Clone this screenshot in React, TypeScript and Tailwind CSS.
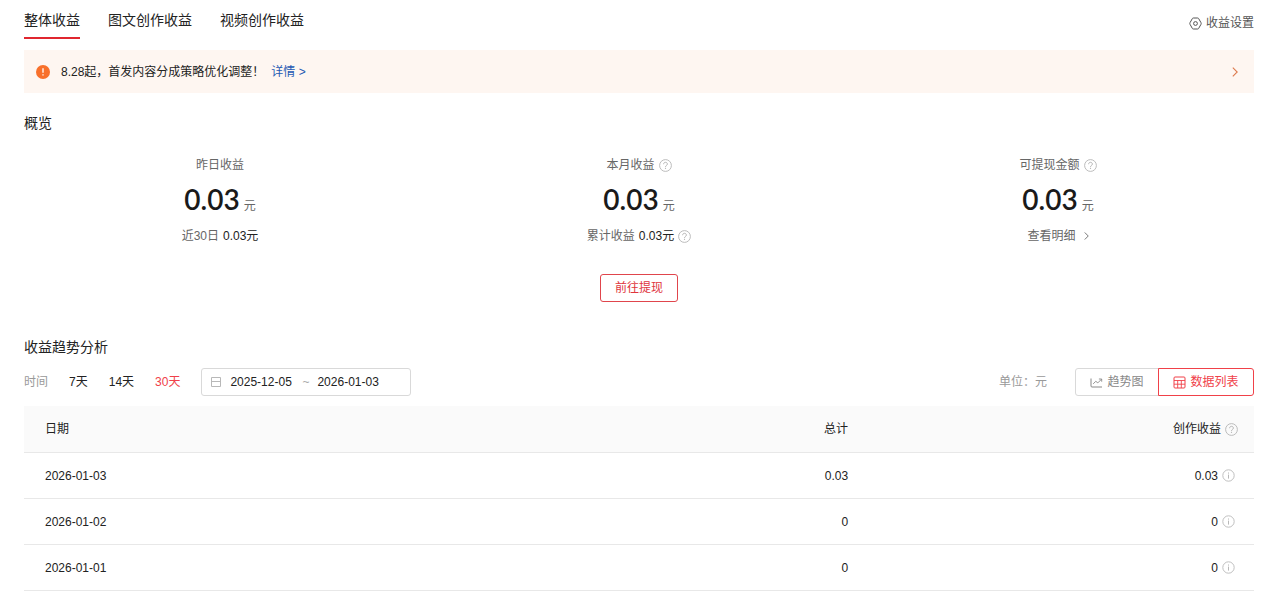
import { useState } from "react";
import clsx from "clsx";

const tabs = ["整体收益", "图文创作收益", "视频创作收益"];
const ranges = ["7天", "14天", "30天"];

const rows = [
  { date: "2026-01-03", total: "0.03", creation: "0.03" },
  { date: "2026-01-02", total: "0", creation: "0" },
  { date: "2026-01-01", total: "0", creation: "0" },
];

function QuestionIcon() {
  return (
    <svg
      viewBox="0 0 13 13"
      className="h-[13px] w-[13px] shrink-0 text-[#b4b4b4]"
      fill="none"
      stroke="currentColor"
    >
      <circle cx="6.5" cy="6.5" r="5.9" strokeWidth="0.9" />
      <path
        d="M4.6 5.2c0-1.100.8-1.900 1.900-1.900s1.900.8 1.900 1.800c0 1.300-1.900 1.400-1.900 2.800"
        strokeWidth="1"
      />
      <path d="M6.5 8.8v1.100" strokeWidth="1.1" />
    </svg>
  );
}

function InfoIcon() {
  return (
    <svg
      viewBox="0 0 13 13"
      className="h-[13px] w-[13px] shrink-0 text-[#b8b8b8]"
      fill="none"
      stroke="currentColor"
    >
      <circle cx="6.5" cy="6.5" r="5.7" strokeWidth="0.9" />
      <path d="M6.5 5.6v4M6.5 3.5v1.1" strokeWidth="1" />
    </svg>
  );
}

function SettingsIcon() {
  return (
    <svg viewBox="0 0 13 13" className="h-[13px] w-[13px]" fill="none" stroke="currentColor">
      <path
        d="M4.3 1h4.4q.5 0 .9.5l2.400 4.200q.4.8 0 1.600l-2.400 4.200q-.4.5-.9.5H4.300q-.5 0-.9-.5L1 7.300q-.4-.8 0-1.600l2.400-4.200q.4-.5.9-.5z"
        strokeWidth="1"
      />
      <circle cx="6.5" cy="6.5" r="1.9" strokeWidth="1" />
    </svg>
  );
}

function ChevronIcon({ className }: { className: string }) {
  return (
    <svg viewBox="0 0 6 10" className={className} fill="none" stroke="currentColor">
      <path d="M0.800 0.600L5.200 5L0.800 9.400" strokeWidth="1.1" />
    </svg>
  );
}

function AlertIcon() {
  return (
    <svg viewBox="0 0 14 14" className="h-[14px] w-[14px] shrink-0">
      <circle cx="7" cy="7" r="7" fill="#f8702b" />
      <path d="M7 3.200v4.600M7 9.200v1.400" stroke="#fff" strokeWidth="1.3" />
    </svg>
  );
}

function CalendarIcon() {
  return (
    <svg
      viewBox="0 0 12 12"
      className="h-3 w-3 shrink-0 text-[#b8b8b8]"
      fill="none"
      stroke="currentColor"
    >
      <path d="M1.500 1.500h9v9h-9zM1.500 5.500h9" strokeWidth="1" />
    </svg>
  );
}

function TrendIcon() {
  return (
    <svg viewBox="0 0 13 13" className="h-[13px] w-[13px]" fill="none" stroke="currentColor">
      <path d="M1 2.500v7.500q0 1 1 1h10" strokeWidth="1" />
      <path d="M3.200 7.800l2.600-2.500 2 1.600 3.700-3.700M8.900 3h2.800v2.700" strokeWidth="0.9" />
    </svg>
  );
}

function GridIcon() {
  return (
    <svg viewBox="0 0 13 13" className="h-[13px] w-[13px]" fill="none" stroke="currentColor">
      <rect x="1" y="1" width="11" height="11" rx="1" strokeWidth="1" />
      <path d="M1 4.500h11M1 8.200h11M4.700 4.500v7.500M8.300 4.500v7.500" strokeWidth="0.9" />
    </svg>
  );
}

function Amount({ value }: { value: string }) {
  return (
    <div className="mt-1 mb-[7px] flex h-10 items-baseline justify-center gap-1">
      <span className="font-[Lato,sans-serif] text-[28px] leading-10 font-semibold text-[#1a1a1a]">
        {value}
      </span>
      <span className="text-[#666]">元</span>
    </div>
  );
}

export default function App() {
  const [tab, setTab] = useState("整体收益");
  const [range, setRange] = useState("30天");
  const [view, setView] = useState("table");
  const [start, setStart] = useState("2025-12-05");
  const [end, setEnd] = useState("2026-01-03");

  return (
    <main className="bg-white pr-[26px] pl-6 font-['Liberation_Sans','Noto_Sans_CJK_SC',sans-serif] text-xs text-[#222]">
      <header className="flex items-start justify-between">
        <nav className="flex gap-7 text-sm">
          {tabs.map((name) => (
            <button
              key={name}
              onClick={() => setTab(name)}
              className={clsx(
                "h-[39px] border-b-2 pt-[3px]",
                tab === name ? "border-[#e0262f]" : "border-transparent"
              )}
            >
              {name}
            </button>
          ))}
        </nav>
        <button className="flex h-[46px] items-center gap-1 text-[#555]">
          <SettingsIcon />
          收益设置
        </button>
      </header>

      <section className="mt-1 flex h-[43px] items-center bg-[#fef6f1] pr-4 pl-3">
        <AlertIcon />
        <p className="ml-[11px]">8.28起，首发内容分成策略优化调整！</p>
        <a href="#" className="ml-[7px] text-[#2459b3]">
          详情 &gt;
        </a>
        <button aria-label="下一条" className="ml-auto text-[#dd7a4d]">
          <ChevronIcon className="h-[10px] w-[6px]" />
        </button>
      </section>

      <h2 className="mt-5 text-sm leading-5">概览</h2>
      <section className="mt-[22px] grid grid-cols-3 gap-[27px] text-center leading-5 text-[#666]">
        <div>
          <div className="flex h-5 items-center justify-center">昨日收益</div>
          <Amount value="0.03" />
          <div className="flex h-5 items-center justify-center gap-1">
            近30日 <span className="text-[#222]">0.03元</span>
          </div>
        </div>
        <div>
          <div className="flex h-5 items-center justify-center gap-1">
            本月收益 <QuestionIcon />
          </div>
          <Amount value="0.03" />
          <div className="flex h-5 items-center justify-center gap-1">
            累计收益 <span className="text-[#222]">0.03元</span> <QuestionIcon />
          </div>
        </div>
        <div>
          <div className="flex h-5 items-center justify-center gap-1">
            可提现金额 <QuestionIcon />
          </div>
          <Amount value="0.03" />
          <a href="#" className="flex h-5 items-center justify-center gap-2">
            查看明细 <ChevronIcon className="h-2 w-[5px]" />
          </a>
        </div>
      </section>
      <div className="mt-7 flex justify-center">
        <button className="h-7 rounded-[3px] border border-[#e0454c] px-[14px] text-[#e0353d]">
          前往提现
        </button>
      </div>

      <h2 className="mt-[35px] text-sm leading-5">收益趋势分析</h2>
      <section className="mt-[11px] flex h-7 items-center">
        <span className="text-[#999]">时间</span>
        <div className="ml-[21px] flex gap-[21px]">
          {ranges.map((r) => (
            <button
              key={r}
              onClick={() => setRange(r)}
              className={range === r ? "text-[#f04149]" : ""}
            >
              {r}
            </button>
          ))}
        </div>
        <div className="ml-[21px] flex h-7 w-[210px] items-center rounded-[3px] border border-[#d9d9d9] pl-2">
          <CalendarIcon />
          <input
            aria-label="开始日期"
            value={start}
            onChange={(e) => setStart(e.target.value)}
            className="ml-2 w-[72px] outline-none"
          />
          <span className="text-[#aaa]">~</span>
          <input
            aria-label="结束日期"
            value={end}
            onChange={(e) => setEnd(e.target.value)}
            className="ml-2 w-[72px] outline-none"
          />
        </div>
        <span className="ml-auto text-[#999]">单位：元</span>
        <div className="ml-7 flex h-7">
          <button
            onClick={() => setView("chart")}
            className={clsx(
              "flex w-[84px] items-center justify-center gap-1 rounded-l-[3px] border",
              view === "chart" ? "z-10 border-[#f04149] text-[#f04149]" : "border-[#d9d9d9] text-[#888]"
            )}
          >
            <TrendIcon />
            趋势图
          </button>
          <button
            onClick={() => setView("table")}
            className={clsx(
              "-ml-px flex w-24 items-center justify-center gap-1 rounded-r-[3px] border",
              view === "table" ? "z-10 border-[#f04149] text-[#f04149]" : "border-[#d9d9d9] text-[#888]"
            )}
          >
            <GridIcon />
            数据列表
          </button>
        </div>
      </section>

      <table className="mt-2.5 w-full table-fixed border-separate border-spacing-0">
        <thead>
          <tr className="h-[47px] bg-[#fafafa]">
            <th className="w-[36%] border-b border-[#e8e8e8] pl-[21px] text-left font-normal">
              日期
            </th>
            <th className="border-b border-[#e8e8e8] text-right font-normal">总计</th>
            <th className="w-[33%] border-b border-[#e8e8e8] pr-4 font-normal">
              <div className="flex items-center justify-end gap-1">
                创作收益 <QuestionIcon />
              </div>
            </th>
          </tr>
        </thead>
        <tbody>
          {rows.map((row) => (
            <tr key={row.date} className="h-[46px]">
              <td className="border-b border-[#e8e8e8] pl-[21px]">{row.date}</td>
              <td className="border-b border-[#e8e8e8] text-right">{row.total}</td>
              <td className="border-b border-[#e8e8e8] pr-[19px]">
                <div className="flex items-center justify-end gap-1">
                  {row.creation} <InfoIcon />
                </div>
              </td>
            </tr>
          ))}
        </tbody>
      </table>
    </main>
  );
}
